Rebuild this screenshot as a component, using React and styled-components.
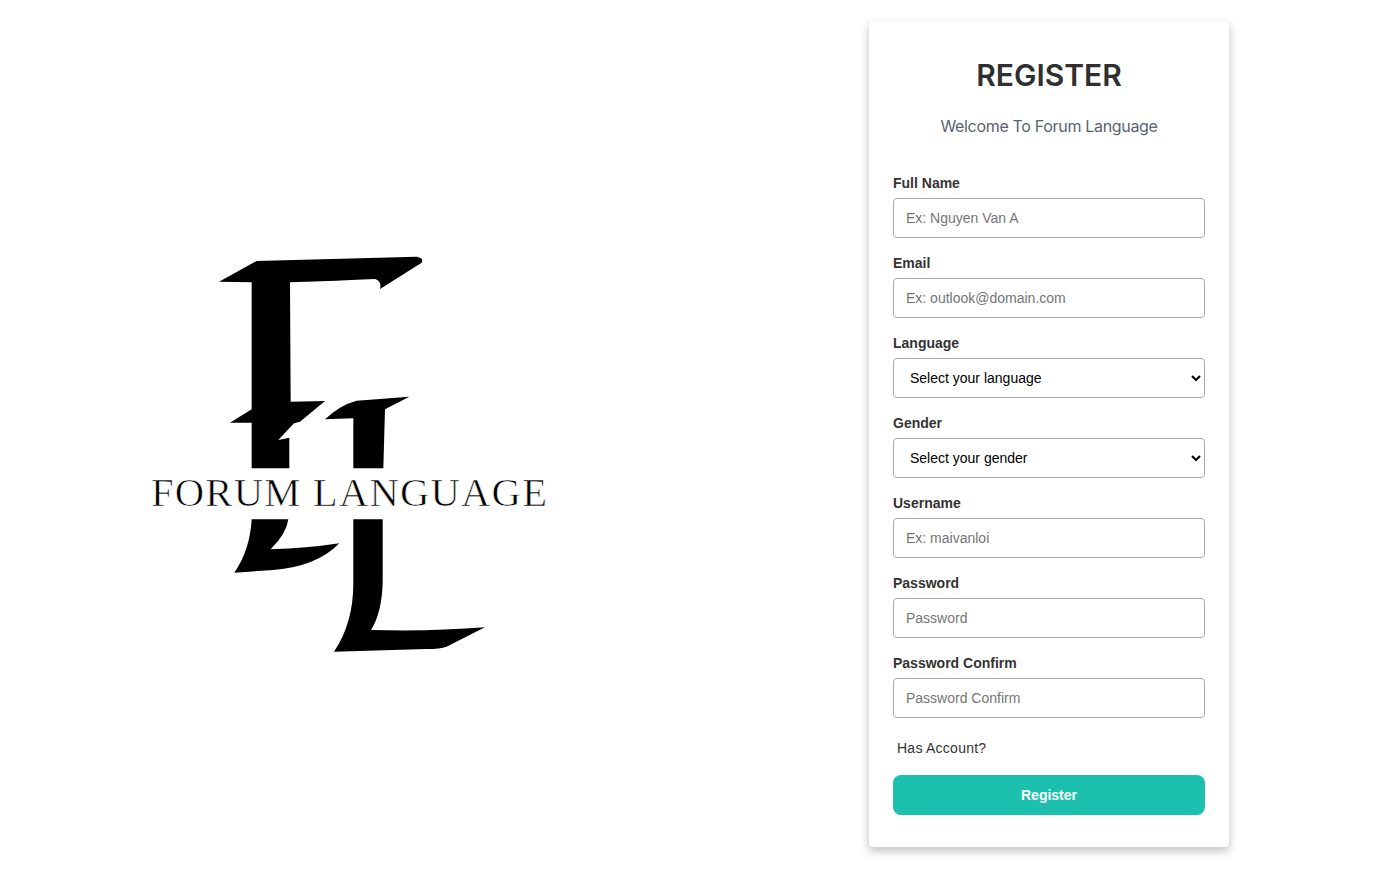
import styled, { createGlobalStyle } from 'styled-components'

const fields = [
  { label: 'Full Name', placeholder: 'Ex: Nguyen Van A' },
  { label: 'Email', placeholder: 'Ex: outlook@domain.com' },
  { label: 'Language', options: 'Select your language' },
  { label: 'Gender', options: 'Select your gender' },
  { label: 'Username', placeholder: 'Ex: maivanloi' },
  { label: 'Password', placeholder: 'Password', type: 'password' },
  { label: 'Password Confirm', placeholder: 'Password Confirm', type: 'password' },
]

function Logo() {
  return (
    <LogoSvg viewBox="0 0 1260 1230" role="img" aria-label="Forum Language logo">
      <path d="M237 95 L350 33 L830 20 Q852 24 845 38 L720 117 Q726 94 705 87 Q600 92 450 97 L452 455 L555 453 L480 515 L462 520 L415 570 L448 563 L448 655 L335 655 L335 518 L270 518 L335 478 L335 97 Z" />
      <path d="M555 508 Q600 465 650 452 L808 440 L735 478 L730 655 L640 655 L640 505 Z" />
      <path d="M335 808 L445 808 Q440 850 392 898 Q500 895 598 880 Q530 950 400 960 L283 968 Q330 900 335 808 Z" />
      <path d="M640 808 L728 808 L728 1000 Q725 1090 693 1140 Q870 1145 1035 1132 Q960 1170 920 1190 Q900 1197 860 1197 L582 1205 Q640 1120 640 1000 Z" />
      <LogoText x="33" y="769" textLength="1188" lengthAdjust="spacing">FORUM LANGUAGE</LogoText>
    </LogoSvg>
  )
}

function App() {
  return (
    <>
      <GlobalStyle />
      <Page>
        <LogoPane>
          <Logo />
        </LogoPane>
        <Card>
          <Title>REGISTER</Title>
          <Subtitle>Welcome To Forum Language</Subtitle>
          <form onSubmit={e => e.preventDefault()}>
            {fields.map(f => (
              <Field key={f.label}>
                <Label>{f.label}</Label>
                {f.options ? (
                  <Select defaultValue="">
                    <option value="">{f.options}</option>
                  </Select>
                ) : (
                  <Input type={f.type || 'text'} placeholder={f.placeholder} />
                )}
              </Field>
            ))}
            <HasAccount>Has Account?</HasAccount>
            <Button type="submit">Register</Button>
          </form>
        </Card>
      </Page>
    </>
  )
}

export default App

const GlobalStyle = createGlobalStyle`
  * {
    box-sizing: border-box;
  }
  body {
    margin: 0;
    background: #fff;
    font-family: "Liberation Sans", Arial, sans-serif;
    color: #333;
  }
`

const Page = styled.div`
  display: flex;
  align-items: flex-start;
  height: 869px;
  overflow: hidden;
`

const LogoPane = styled.div`
  width: 869px;
  padding: 250px 0 0 140px;
`

const LogoSvg = styled.svg`
  display: block;
  width: 420px;
  height: 410px;
  fill: #000;
`

const LogoText = styled.text`
  font-family: "Liberation Serif", serif;
  font-size: 122px;
  stroke: #fff;
  stroke-width: 2px;
`

const Card = styled.div`
  width: 360px;
  margin-top: 21px;
  padding: 32px 24px;
  background: #fff;
  border-radius: 4px;
  box-shadow: 0 4px 10px rgba(0, 0, 0, 0.25);
`

const Title = styled.h1`
  margin: 0;
  height: 44px;
  font-family: Inter, sans-serif;
  font-size: 30px;
  line-height: 44px;
  font-weight: 600;
  text-align: center;
  color: #2f2f2f;
`

const Subtitle = styled.p`
  margin: 17px 0 35px;
  font-family: Inter, sans-serif;
  font-size: 16px;
  line-height: 24px;
  letter-spacing: -0.32px;
  text-align: center;
  color: #5b6370;
`

const Field = styled.div`
  margin-bottom: 15px;
`

const Label = styled.label`
  display: block;
  margin-bottom: 5px;
  font-size: 14px;
  line-height: 20px;
  font-weight: 700;
  color: #333;
`

const Input = styled.input`
  display: block;
  width: 100%;
  height: 40px;
  padding: 0 12px;
  border: 1px solid #aaa;
  border-radius: 4px;
  font-family: inherit;
  font-size: 14px;
  outline: none;
`

const Select = styled.select`
  display: block;
  width: 100%;
  height: 40px;
  padding: 0 12px;
  border: 1px solid #aaa;
  border-radius: 4px;
  background: #fff;
  font-family: inherit;
  font-size: 14px;
  color: #000;
  outline: none;
`

const HasAccount = styled.div`
  margin: 20px 0 17px;
  padding-left: 4px;
  font-size: 14px;
  line-height: 20px;
  letter-spacing: 0.25px;
  color: #333;
`

const Button = styled.button`
  display: block;
  width: 100%;
  height: 40px;
  border: none;
  border-radius: 8px;
  background: #1cc0ae;
  color: #fff;
  font-family: inherit;
  font-size: 14px;
  font-weight: 700;
  cursor: pointer;
`
